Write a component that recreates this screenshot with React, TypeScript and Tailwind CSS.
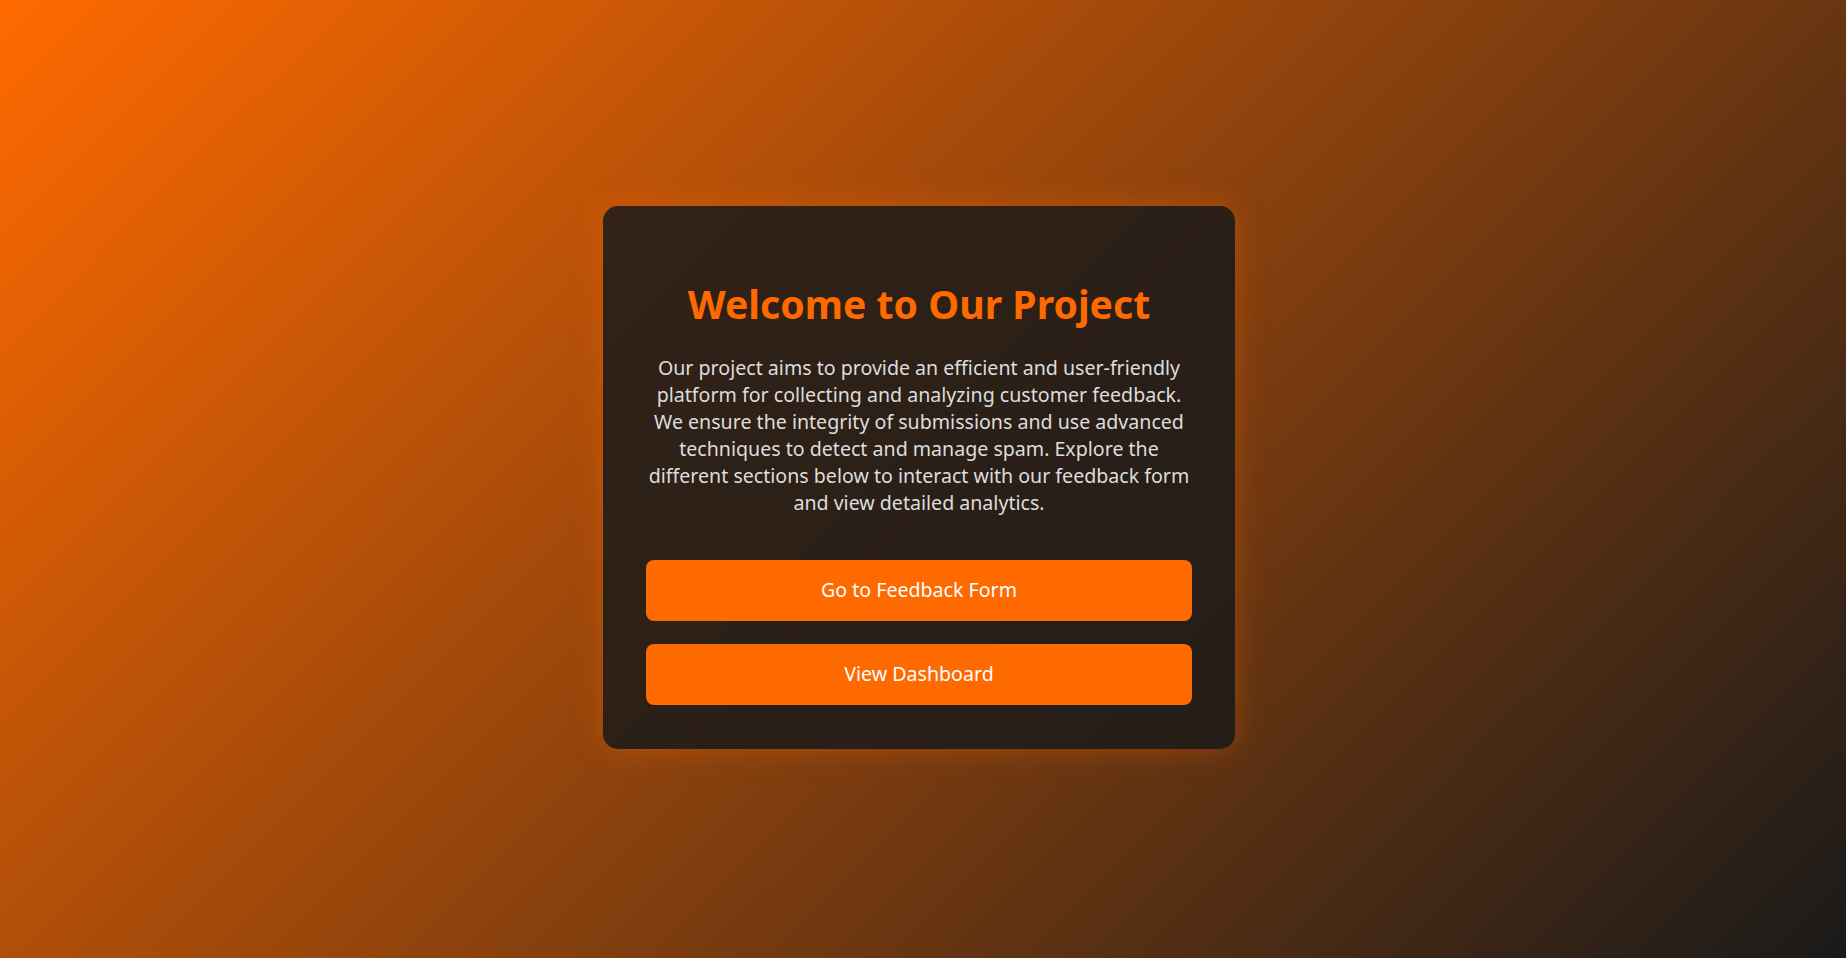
import React from "react";

export default function App() {
  return (
    <div
      className="min-h-screen w-full flex items-center justify-center bg-[linear-gradient(135deg,#ff6a00_0%,#1a1a1a_100%)]"
      style={{ fontFamily: '"Noto Sans", "Open Sans", sans-serif' }}
    >
      <div className="mr-[8px] mb-[4px] w-[632px] rounded-[15px] bg-[rgba(26,26,26,0.85)] px-[43px] pt-[74px] pb-[44px] text-center shadow-[0_0_30px_rgba(255,106,0,0.35)]">
        <h1 className="text-[39.2px] leading-[48px] font-bold text-[#ff6a00]">Welcome to Our Project</h1>
        <p className="mt-[26px] text-[19.6px] leading-[27px] text-[#dddddd]">
          Our project aims to provide an efficient and user-friendly platform for collecting and analyzing customer feedback. We ensure the integrity of submissions and use advanced techniques to detect and manage spam. Explore the different sections below to interact with our feedback form and view detailed analytics.
        </p>
        <div className="mt-[44px] flex flex-col gap-[23px]">
          <button className="w-full h-[61px] rounded-[8px] bg-[#ff6a00] text-white text-[19.6px]">Go to Feedback Form</button>
          <button className="w-full h-[61px] rounded-[8px] bg-[#ff6a00] text-white text-[19.6px]">View Dashboard</button>
        </div>
      </div>
    </div>
  );
}
